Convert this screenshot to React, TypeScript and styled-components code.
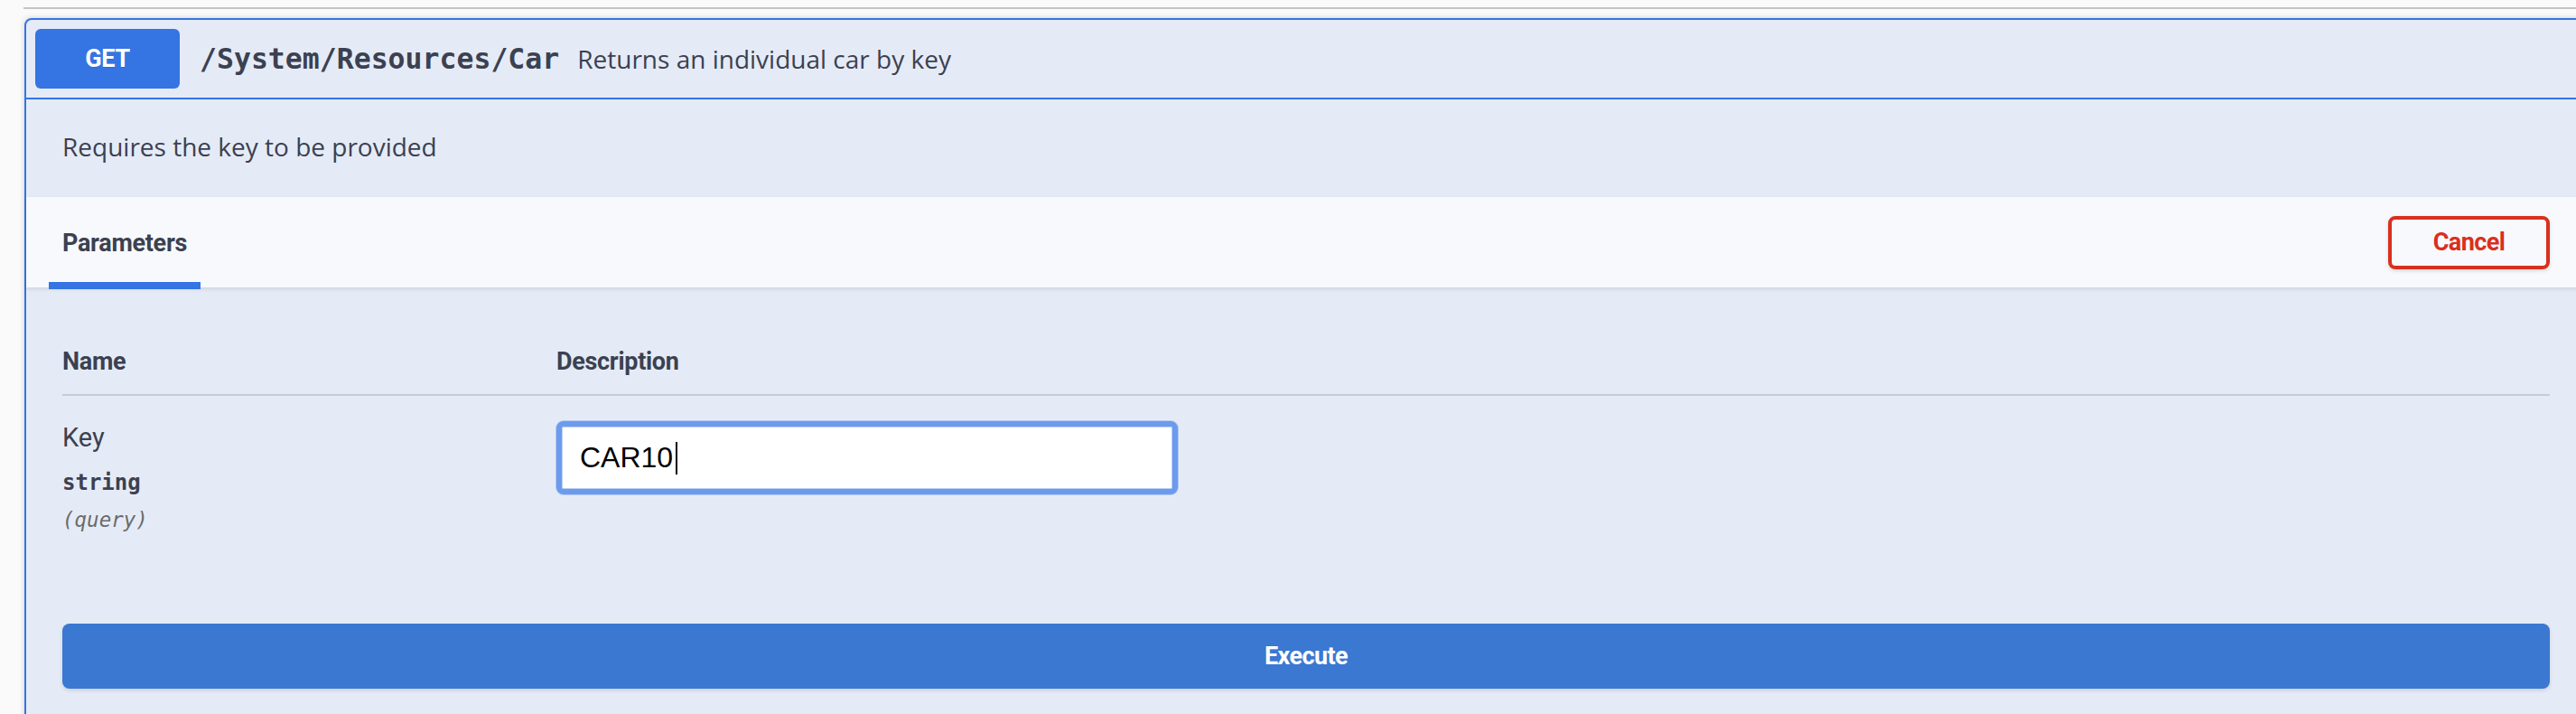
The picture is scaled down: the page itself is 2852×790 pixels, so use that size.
import React from "react";
import styled, { createGlobalStyle } from "styled-components";

const Global = createGlobalStyle`
  html, body { margin: 0; padding: 0; background: #fafafa; overflow: hidden; }
  body { font-family: "Open Sans", "Noto Sans", sans-serif; color: #3b4151; }
`;

const Page = styled.div`
  width: 2852px;
  height: 790px;
  padding: 8px 0 0 26px;
  box-sizing: border-box;
  overflow: hidden;
`;

const TopRule = styled.div`
  height: 2px;
  background: #c4c4c4;
  margin-bottom: 10px;
`;

const Block = styled.section`
  margin-left: 1px;
  margin-right: -13px;
  border: 2px solid #3574e3;
  border-radius: 8px;
  background: #e5ebf6;
  box-shadow: 0 0 6px rgba(0, 0, 0, 0.18);
  height: 900px;
`;

const Summary = styled.div`
  display: flex;
  align-items: center;
  padding: 10px;
  border-bottom: 2px solid #3574e3;
`;

const Method = styled.div`
  width: 160px;
  height: 66px;
  border-radius: 6px;
  background: #3574e3;
  color: #fff;
  font-family: Roboto, sans-serif;
  font-weight: 700;
  font-size: 27px;
  letter-spacing: -0.3px;
  display: flex;
  align-items: center;
  justify-content: center;
  text-shadow: 0 1px 0 rgba(0, 0, 0, 0.1);
`;

const Path = styled.span`
  margin-left: 22px;
  font-family: "DejaVu Sans Mono", monospace;
  font-weight: 700;
  font-size: 31.5px;
  color: #3b4151;
`;

const SummaryDesc = styled.span`
  margin-left: 20px;
  font-size: 28px;
  color: #3b4151;
`;

const Description = styled.div`
  padding: 36px 40px 40px;
  font-size: 28px;
  line-height: 32px;
  color: #3b4151;
`;

const SectionHeader = styled.div`
  display: flex;
  align-items: center;
  justify-content: space-between;
  height: 100px;
  padding: 0 40px 0 25px;
  background: #f8f9fc;
  box-shadow: 0 2px 4px rgba(0, 0, 0, 0.1);
`;

const Tab = styled.div`
  align-self: stretch;
  display: flex;
  align-items: center;
  padding: 8px 15px 0;
  font-family: Roboto, sans-serif;
  font-size: 27px;
  letter-spacing: -0.3px;
  font-weight: 700;
  border-bottom: 8px solid #3574e3;
  margin-bottom: -2px;
  box-sizing: border-box;
`;

const OutlineButton = styled.button`
  width: 179px;
  height: 59px;
  border: 4px solid #d9301e;
  border-radius: 8px;
  background: transparent;
  color: #d9301e;
  font-family: Roboto, sans-serif;
  font-weight: 700;
  font-size: 27px;
  letter-spacing: -0.6px;
  box-shadow: 0 2px 4px rgba(0, 0, 0, 0.12);
`;

const TableWrap = styled.div`
  padding: 0 40px;
`;

const Table = styled.div`
  display: grid;
  grid-template-columns: 547px 1fr;
`;

const HeadCell = styled.div`
  padding: 66px 0 20px;
  font-family: Roboto, sans-serif;
  font-size: 27px;
  letter-spacing: -0.3px;
  font-weight: 700;
  border-bottom: 2px solid #c6cbd5;
`;

const Cell = styled.div<{ $top?: number }>`
  padding-top: ${(p) => p.$top ?? 26}px;
`;

const ParamName = styled.div`
  font-family: Roboto, sans-serif;
  font-size: 29px;
  line-height: 40px;
`;

const ParamType = styled.div`
  font-family: "DejaVu Sans Mono", monospace;
  font-weight: 700;
  font-size: 24px;
  padding: 16px 0 14px;
`;

const ParamIn = styled.div`
  font-family: "DejaVu Sans Mono", monospace;
  font-style: italic;
  font-size: 22.5px;
  color: #6b6b6b;
`;

const InputBox = styled.div`
  width: 688px;
  height: 81px;
  box-sizing: border-box;
  border: 6px solid #6c9bee;
  border-radius: 8px;
  box-shadow: 0 0 0 1px #b3caf3, inset 0 0 0 1px #bcd0f5;
  background: #fff;
  display: flex;
  align-items: center;
  padding-left: 20px;
  font-family: "Liberation Sans", Arial, sans-serif;
  font-size: 32px;
  color: #000;
`;

const Caret = styled.span`
  display: inline-block;
  width: 2px;
  height: 36px;
  background: #000;
  margin-left: 3px;
`;

const ExecuteRow = styled.div`
  padding: 102px 40px 0;
`;

const PrimaryButton = styled.button`
  width: 100%;
  height: 72px;
  border: none;
  border-radius: 8px;
  background: #3a78d1;
  color: #fff;
  font-family: Roboto, sans-serif;
  font-weight: 700;
  font-size: 27px;
  letter-spacing: -0.6px;
  box-shadow: 0 2px 4px rgba(0, 0, 0, 0.12);
`;

export default function App() {
  return (
    <>
      <Global />
      <Page>
        <TopRule />
        <Block>
          <Summary>
            <Method>GET</Method>
            <Path>/System/Resources/Car</Path>
            <SummaryDesc>Returns an individual car by key</SummaryDesc>
          </Summary>
          <Description>Requires the key to be provided</Description>
          <SectionHeader>
            <Tab>Parameters</Tab>
            <OutlineButton>Cancel</OutlineButton>
          </SectionHeader>
          <TableWrap>
            <Table>
              <HeadCell>Name</HeadCell>
              <HeadCell>Description</HeadCell>
              <Cell>
                <ParamName>Key</ParamName>
                <ParamType>string</ParamType>
                <ParamIn>(query)</ParamIn>
              </Cell>
              <Cell $top={28}>
                <InputBox>
                  CAR10
                  <Caret />
                </InputBox>
              </Cell>
            </Table>
          </TableWrap>
          <ExecuteRow>
            <PrimaryButton>Execute</PrimaryButton>
          </ExecuteRow>
        </Block>
      </Page>
    </>
  );
}
